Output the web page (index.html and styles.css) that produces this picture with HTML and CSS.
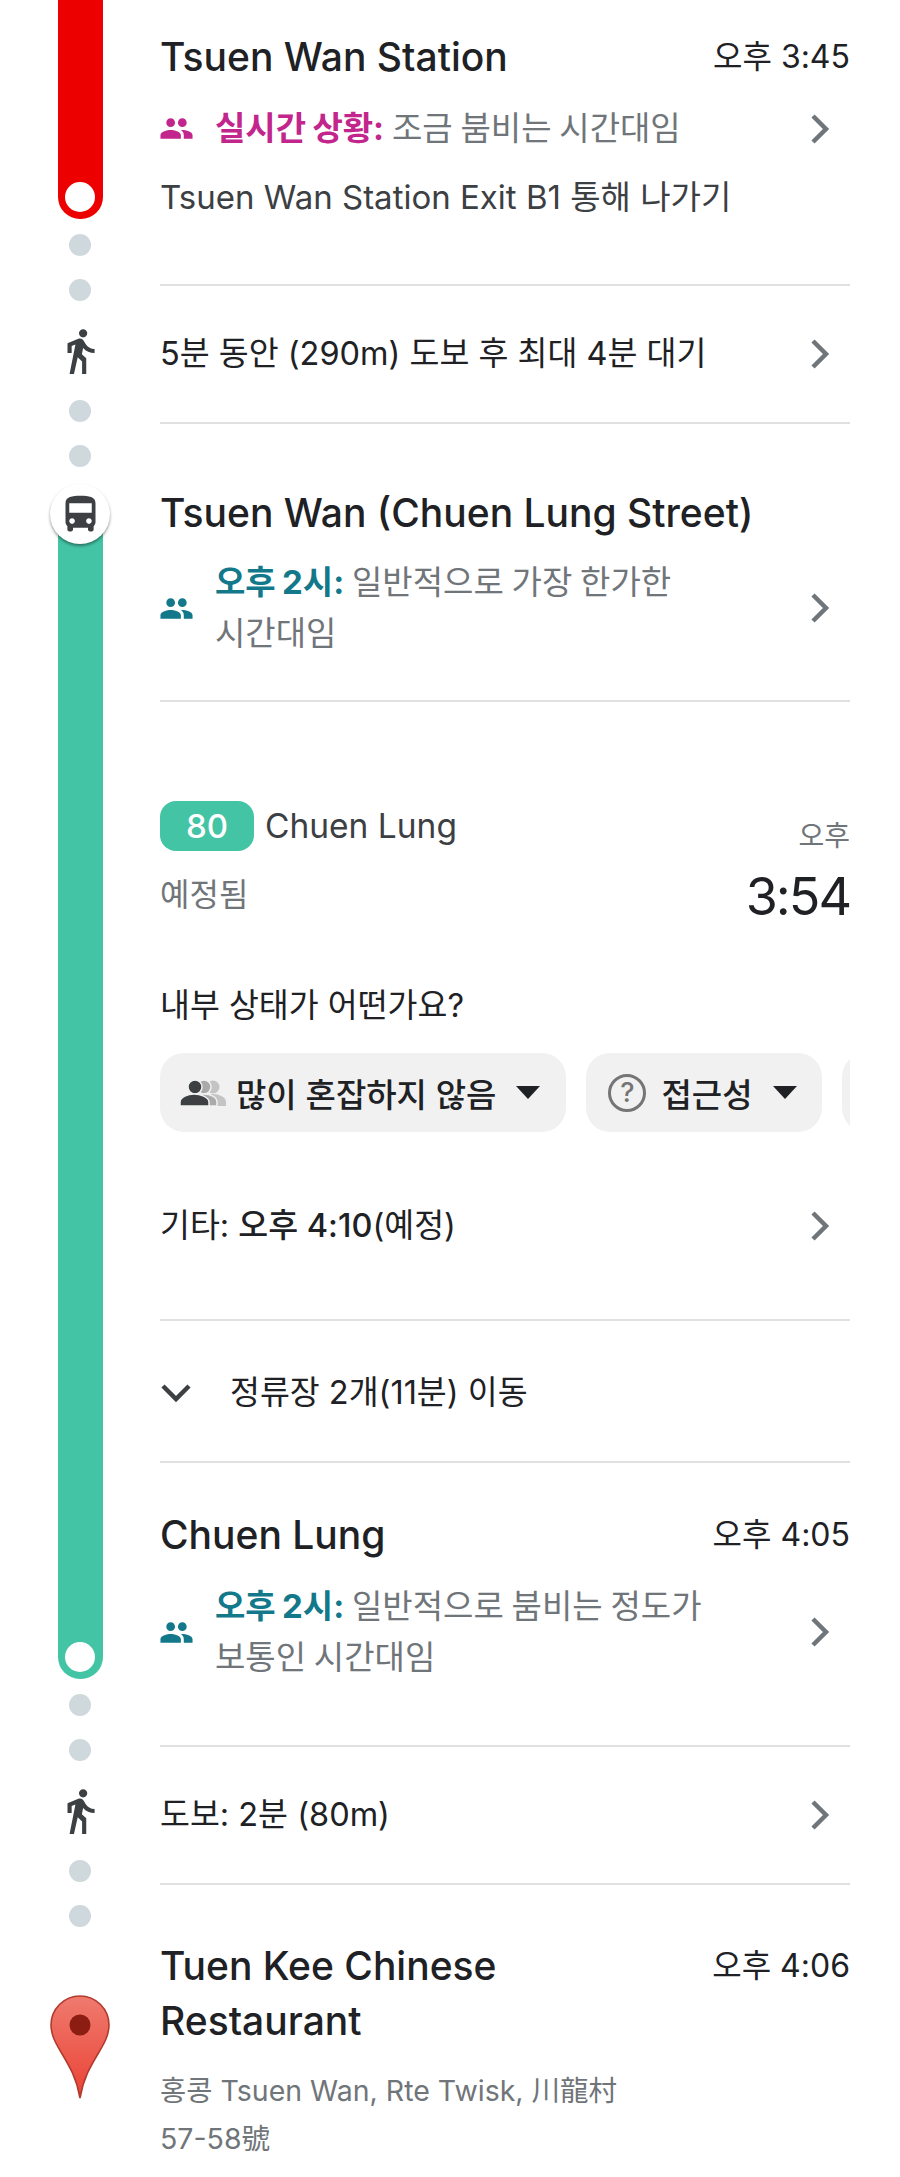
FILE: index.html
```html
<!DOCTYPE html>
<html lang="ko">
  <head>
    <meta charset="utf-8" />
    <title>Transit directions</title>
    <link rel="stylesheet" href="styles.css">
  </head>
  <body>
    <div class="page">
      <!-- left rail: lines, dots, icons -->
      <div class="rail">
        <div class="line line-red"><div class="line-end"></div></div>
        <div class="dots dots-first"><div class="dot"></div><div class="dot"></div></div>
        <svg class="walk" viewBox="0 0 24 24"><path d="M13.5 5.5c1.1 0 2-.9 2-2s-.9-2-2-2-2 .9-2 2 .9 2 2 2zM9.8 8.9L7 23h2.1l1.8-8 2.1 2v6h2v-7.5l-2.1-2 .6-3C14.8 12 16.8 13 19 13v-2c-1.9 0-3.5-1-4.3-2.4l-1-1.6c-.4-.6-1-1-1.7-1-.3 0-.5.1-.8.1L6 8.3V13h2V9.6l1.8-.7"/></svg>
        <div class="dots"><div class="dot"></div><div class="dot"></div></div>
        <div class="bus-stop">
          <svg class="bus" viewBox="0 0 24 24"><path d="M4 16c0 .88.39 1.67 1 2.22V20c0 .55.45 1 1 1h1c.55 0 1-.45 1-1v-1h8v1c0 .55.45 1 1 1h1c.55 0 1-.45 1-1v-1.78c.61-.55 1-1.34 1-2.22V6c0-3.5-3.58-4-8-4s-8 .5-8 4v10zm3.5 1c-.83 0-1.5-.67-1.5-1.5S6.67 14 7.5 14s1.5.67 1.5 1.5S8.33 17 7.5 17zm9 0c-.83 0-1.5-.67-1.5-1.5s.67-1.5 1.5-1.5 1.5.67 1.5 1.5-.67 1.5-1.5 1.5zm1.5-6H6V6h12v5z"/></svg>
        </div>
        <div class="line line-green"><div class="line-end"></div></div>
        <div class="dots dots-first"><div class="dot"></div><div class="dot"></div></div>
        <svg class="walk" viewBox="0 0 24 24"><path d="M13.5 5.5c1.1 0 2-.9 2-2s-.9-2-2-2-2 .9-2 2 .9 2 2 2zM9.8 8.9L7 23h2.1l1.8-8 2.1 2v6h2v-7.5l-2.1-2 .6-3C14.8 12 16.8 13 19 13v-2c-1.9 0-3.5-1-4.3-2.4l-1-1.6c-.4-.6-1-1-1.7-1-.3 0-.5.1-.8.1L6 8.3V13h2V9.6l1.8-.7"/></svg>
        <div class="dots"><div class="dot"></div><div class="dot"></div></div>
        <svg class="pin" viewBox="0 0 60 104">
          <defs>
            <linearGradient id="pinFill" x1="0" y1="0" x2="0" y2="1">
              <stop offset="0" stop-color="#ef7a6e" />
              <stop offset="1" stop-color="#ea4335" />
            </linearGradient>
          </defs>
          <path d="M30 1C14 1 1 14 1 30c0 22 23 36 29 73 6-37 29-51 29-73C59 14 46 1 30 1z" fill="url(#pinFill)" stroke="#b23a2e" stroke-width="1.6"/>
          <circle cx="30" cy="30" r="10.5" fill="#8c1d12"/>
        </svg>
      </div>

      <!-- right side: stops and rows -->
      <div class="content">
        <section class="block block-first">
          <div class="head">
            <div class="title">Tsuen Wan Station</div>
            <div class="time">오후 3:45</div>
          </div>
          <div class="crowd crowd-live">
            <svg class="people" viewBox="0 0 24 24"><path d="M16 11c1.66 0 2.99-1.34 2.99-3S17.66 5 16 5c-1.66 0-3 1.34-3 3s1.34 3 3 3zm-8 0c1.66 0 2.99-1.34 2.99-3S9.66 5 8 5C6.34 5 5 6.34 5 8s1.34 3 3 3zm0 2c-2.33 0-7 1.17-7 3.5V19h14v-2.5c0-2.33-4.67-3.5-7-3.5zm8 0c-.29 0-.62.02-.97.05 1.16.84 1.97 1.97 1.97 3.45V19h6v-2.5c0-2.33-4.67-3.5-7-3.5z"/></svg>
            <div class="crowd-text"><b>실시간 상황:</b> 조금 붐비는 시간대임</div>
            <svg class="chevron" viewBox="0 0 24 32"><path d="M5 3l13 13L5 29"/></svg>
          </div>
          <div class="exit">Tsuen Wan Station Exit B1 통해 나가기</div>
        </section>

        <section class="block row">
          <div class="row-text">5분 동안 (290m) 도보 후 최대 4분 대기</div>
          <svg class="chevron" viewBox="0 0 24 32"><path d="M5 3l13 13L5 29"/></svg>
        </section>

        <section class="block block-stop">
          <div class="head">
            <div class="title">Tsuen Wan (Chuen Lung Street)</div>
          </div>
          <div class="crowd crowd-usual">
            <svg class="people" viewBox="0 0 24 24"><path d="M16 11c1.66 0 2.99-1.34 2.99-3S17.66 5 16 5c-1.66 0-3 1.34-3 3s1.34 3 3 3zm-8 0c1.66 0 2.99-1.34 2.99-3S9.66 5 8 5C6.34 5 5 6.34 5 8s1.34 3 3 3zm0 2c-2.33 0-7 1.17-7 3.5V19h14v-2.5c0-2.33-4.67-3.5-7-3.5zm8 0c-.29 0-.62.02-.97.05 1.16.84 1.97 1.97 1.97 3.45V19h6v-2.5c0-2.33-4.67-3.5-7-3.5z"/></svg>
            <div class="crowd-text">
              <div><b>오후 2시:</b> 일반적으로 가장 한가한</div>
              <div>시간대임</div>
            </div>
            <svg class="chevron" viewBox="0 0 24 32"><path d="M5 3l13 13L5 29"/></svg>
          </div>
        </section>

        <section class="block block-ride">
          <div class="ride-head">
            <div>
              <div class="route"><span class="route-no">80</span><span class="route-name">Chuen Lung</span></div>
              <div class="scheduled">예정됨</div>
            </div>
            <div class="depart">
              <div class="depart-ampm">오후</div>
              <div class="depart-time">3:54</div>
            </div>
          </div>
          <div class="question">내부 상태가 어떤가요?</div>
          <div class="chips">
            <div class="chip chip-crowd">
              <svg class="chip-people" viewBox="0 0 46 26">
                <circle cx="33" cy="7" r="6.5" fill="#c4c4c4"/>
                <path d="M20 26v-4c0-5 7-8 13-8s13 3 13 8v4z" fill="#c4c4c4"/>
                <circle cx="24" cy="7" r="7" fill="#aaa" stroke="#f1f1f1" stroke-width="1.5"/>
                <path d="M11 26v-4c0-5 7-8 13-8s13 3 13 8v4z" fill="#aaa" stroke="#f1f1f1" stroke-width="1.5"/>
                <circle cx="15" cy="7" r="7" fill="#3c4043" stroke="#f1f1f1" stroke-width="1.5"/>
                <path d="M0 26v-4c0-5 8-8 14-8s15 3 15 8v4z" fill="#3c4043" stroke="#f1f1f1" stroke-width="1.5"/>
              </svg>
              <span class="chip-label">많이 혼잡하지 않음</span>
              <span class="caret"></span>
            </div>
            <div class="chip chip-help">
              <span class="help">?</span>
              <span class="chip-label">접근성</span>
              <span class="caret"></span>
            </div>
            <div class="chip chip-cut"></div>
          </div>
          <div class="other">
            <div class="row-text">기타: <b>오후 4:10</b>(예정)</div>
            <svg class="chevron" viewBox="0 0 24 32"><path d="M5 3l13 13L5 29"/></svg>
          </div>
        </section>

        <section class="block block-stops">
          <svg class="chevron-down" viewBox="0 0 32 24"><path d="M3 5l13 13L29 5"/></svg>
          <div class="row-text">정류장 2개(11분) 이동</div>
        </section>

        <section class="block block-arrive">
          <div class="head">
            <div class="title">Chuen Lung</div>
            <div class="time">오후 4:05</div>
          </div>
          <div class="crowd crowd-usual">
            <svg class="people" viewBox="0 0 24 24"><path d="M16 11c1.66 0 2.99-1.34 2.99-3S17.66 5 16 5c-1.66 0-3 1.34-3 3s1.34 3 3 3zm-8 0c1.66 0 2.99-1.34 2.99-3S9.66 5 8 5C6.34 5 5 6.34 5 8s1.34 3 3 3zm0 2c-2.33 0-7 1.17-7 3.5V19h14v-2.5c0-2.33-4.67-3.5-7-3.5zm8 0c-.29 0-.62.02-.97.05 1.16.84 1.97 1.97 1.97 3.45V19h6v-2.5c0-2.33-4.67-3.5-7-3.5z"/></svg>
            <div class="crowd-text">
              <div><b>오후 2시:</b> 일반적으로 붐비는 정도가</div>
              <div>보통인 시간대임</div>
            </div>
            <svg class="chevron" viewBox="0 0 24 32"><path d="M5 3l13 13L5 29"/></svg>
          </div>
        </section>

        <section class="block row">
          <div class="row-text">도보: 2분 (80m)</div>
          <svg class="chevron" viewBox="0 0 24 32"><path d="M5 3l13 13L5 29"/></svg>
        </section>

        <section class="block block-dest">
          <div class="head">
            <div class="title title-dest">Tuen Kee Chinese Restaurant</div>
            <div class="time">오후 4:06</div>
          </div>
          <div class="address">홍콩 Tsuen Wan, Rte Twisk, 川龍村 57-58號</div>
        </section>
      </div>
    </div>
  </body>
</html>
```

FILE: styles.css
```css
html,
body {
  margin: 0;
  padding: 0;
  background: #fff;
}
body {
  width: 900px;
  height: 2177px;
  overflow: hidden;
  font-family: Inter, "Noto Sans CJK KR", sans-serif;
  color: #202124;
}
.page {
  display: flex;
  width: 900px;
}

/* rail */
.rail {
  display: flex;
  flex-direction: column;
  align-items: center;
  width: 160px;
  flex: none;
}
.line {
  display: flex;
  flex-direction: column;
  justify-content: flex-end;
  align-items: center;
  box-sizing: border-box;
  width: 45px;
  padding-bottom: 7px;
  border-radius: 0 0 22px 22px;
}
.line-red {
  height: 219px;
  background: #ec0000;
}
.line-green {
  height: 1156px;
  margin-top: -21px;
  background: #43c4a5;
}
.line-end {
  width: 30px;
  height: 30px;
  border-radius: 50%;
  background: #fff;
}
.dots {
  display: flex;
  flex-direction: column;
  gap: 23px;
  margin-top: 24px;
}
.dots-first {
  margin-top: 15px;
}
.dot {
  width: 22px;
  height: 22px;
  border-radius: 50%;
  background: #cfd8dc;
}
.walk {
  width: 50px;
  height: 50px;
  margin-top: 25px;
  fill: #3c4043;
}
.bus-stop {
  position: relative;
  z-index: 1;
  display: flex;
  align-items: center;
  justify-content: center;
  width: 60px;
  height: 60px;
  margin-top: 17px;
  border-radius: 50%;
  background: #fff;
  box-shadow: 0 2px 3px rgba(0, 0, 0, 0.4);
}
.bus {
  width: 45px;
  height: 45px;
  fill: #3c4043;
}
.pin {
  width: 60px;
  height: 104px;
  margin-top: 68px;
}

/* content */
.content {
  width: 690px;
  flex: none;
}
.block {
  box-sizing: border-box;
  border-bottom: 2px solid #e0e0e0;
}
.head {
  display: flex;
  justify-content: space-between;
  align-items: flex-start;
}
.title {
  font-size: 39px;
  font-weight: 500;
  line-height: 56px;
}
.time {
  font-size: 32px;
  line-height: 56px;
  white-space: nowrap;
}
.crowd {
  display: flex;
  align-items: center;
  margin-top: 18px;
  font-size: 33px;
  line-height: 51px;
  word-spacing: -1.5px;
  color: #70757a;
}
.people {
  width: 35px;
  height: 35px;
  margin-left: -1px;
  margin-right: 21px;
  flex: none;
}
.crowd-text {
  width: 500px;
  flex: none;
  word-break: keep-all;
}
.crowd-live b {
  color: #c2268c;
}
.crowd-live .people {
  fill: #c2268c;
}
.crowd-usual b {
  color: #12788a;
}
.crowd-usual .people {
  fill: #12788a;
}
b {
  font-weight: 700;
}
.chevron {
  width: 24px;
  height: 32px;
  margin-left: auto;
  margin-right: 18px;
  flex: none;
  fill: none;
  stroke: #70757a;
  stroke-width: 4.5;
}
.exit {
  margin-top: 18px;
  font-size: 33px;
  line-height: 51px;
  color: #3c4043;
}
.block-first {
  height: 286px;
  padding-top: 29px;
}
.row {
  display: flex;
  align-items: center;
  height: 138px;
}
.row-text {
  font-size: 32.5px;
  line-height: 50px;
}
.block-stop {
  height: 278px;
  padding-top: 61px;
}
.block-stop .crowd {
  margin-top: 16px;
}

/* ride */
.block-ride {
  height: 619px;
  padding-top: 99px;
}
.ride-head {
  display: flex;
  justify-content: space-between;
}
.route {
  display: flex;
  align-items: center;
}
.route-no {
  width: 94px;
  height: 50px;
  border-radius: 16px;
  background: #43c4a5;
  color: #fff;
  font-size: 33px;
  font-weight: 500;
  line-height: 50px;
  text-align: center;
}
.route-name {
  margin-left: 11px;
  font-size: 33.5px;
  color: #3c4043;
}
.scheduled {
  margin-top: 22px;
  font-size: 32px;
  line-height: 44px;
  color: #70757a;
}
.depart {
  margin-top: 13px;
  text-align: right;
}
.depart-ampm {
  font-size: 28px;
  line-height: 44px;
  color: #70757a;
}
.depart-time {
  margin-top: 9px;
  font-size: 52px;
  line-height: 60px;
  letter-spacing: -2px;
}
.question {
  margin-top: 54px;
  font-size: 32.5px;
  line-height: 50px;
}
.chips {
  display: flex;
  gap: 20px;
  margin-top: 22px;
  overflow: hidden;
}
.chip {
  display: flex;
  align-items: center;
  box-sizing: border-box;
  height: 79px;
  flex: none;
  border-radius: 24px;
  background: #f1f1f1;
}
.chip-crowd {
  padding: 0 26px 0 20px;
}
.chip-help {
  padding: 0 25px 0 22px;
}
.chip-cut {
  width: 60px;
}
.chip-people {
  width: 46px;
  height: 26px;
  margin-right: 10px;
}
.chip-label {
  margin-right: 20px;
  font-size: 33px;
  font-weight: 500;
  white-space: nowrap;
}
.caret {
  width: 0;
  height: 0;
  border-left: 12px solid transparent;
  border-right: 12px solid transparent;
  border-top: 13px solid #202124;
}
.help {
  box-sizing: border-box;
  width: 38px;
  height: 38px;
  margin-right: 15px;
  border: 3px solid #757575;
  border-radius: 50%;
  color: #757575;
  font-size: 27px;
  font-weight: 500;
  line-height: 32px;
  text-align: center;
}
.other {
  display: flex;
  align-items: center;
  margin-top: 69px;
}
.other b {
  font-weight: 500;
}

/* stops */
.block-stops {
  display: flex;
  align-items: center;
  height: 142px;
  padding-top: 4px;
}
.chevron-down {
  width: 32px;
  height: 24px;
  margin-right: 38px;
  flex: none;
  fill: none;
  stroke: #3c4043;
  stroke-width: 4.5;
}
.block-arrive {
  height: 284px;
  padding-top: 44px;
}
.block-dest {
  padding-top: 53px;
  border-bottom: 0;
}
.title-dest {
  width: 480px;
  line-height: 55px;
}
.address {
  width: 480px;
  margin-top: 19px;
  font-size: 28.5px;
  line-height: 48px;
  color: #70757a;
}
```
